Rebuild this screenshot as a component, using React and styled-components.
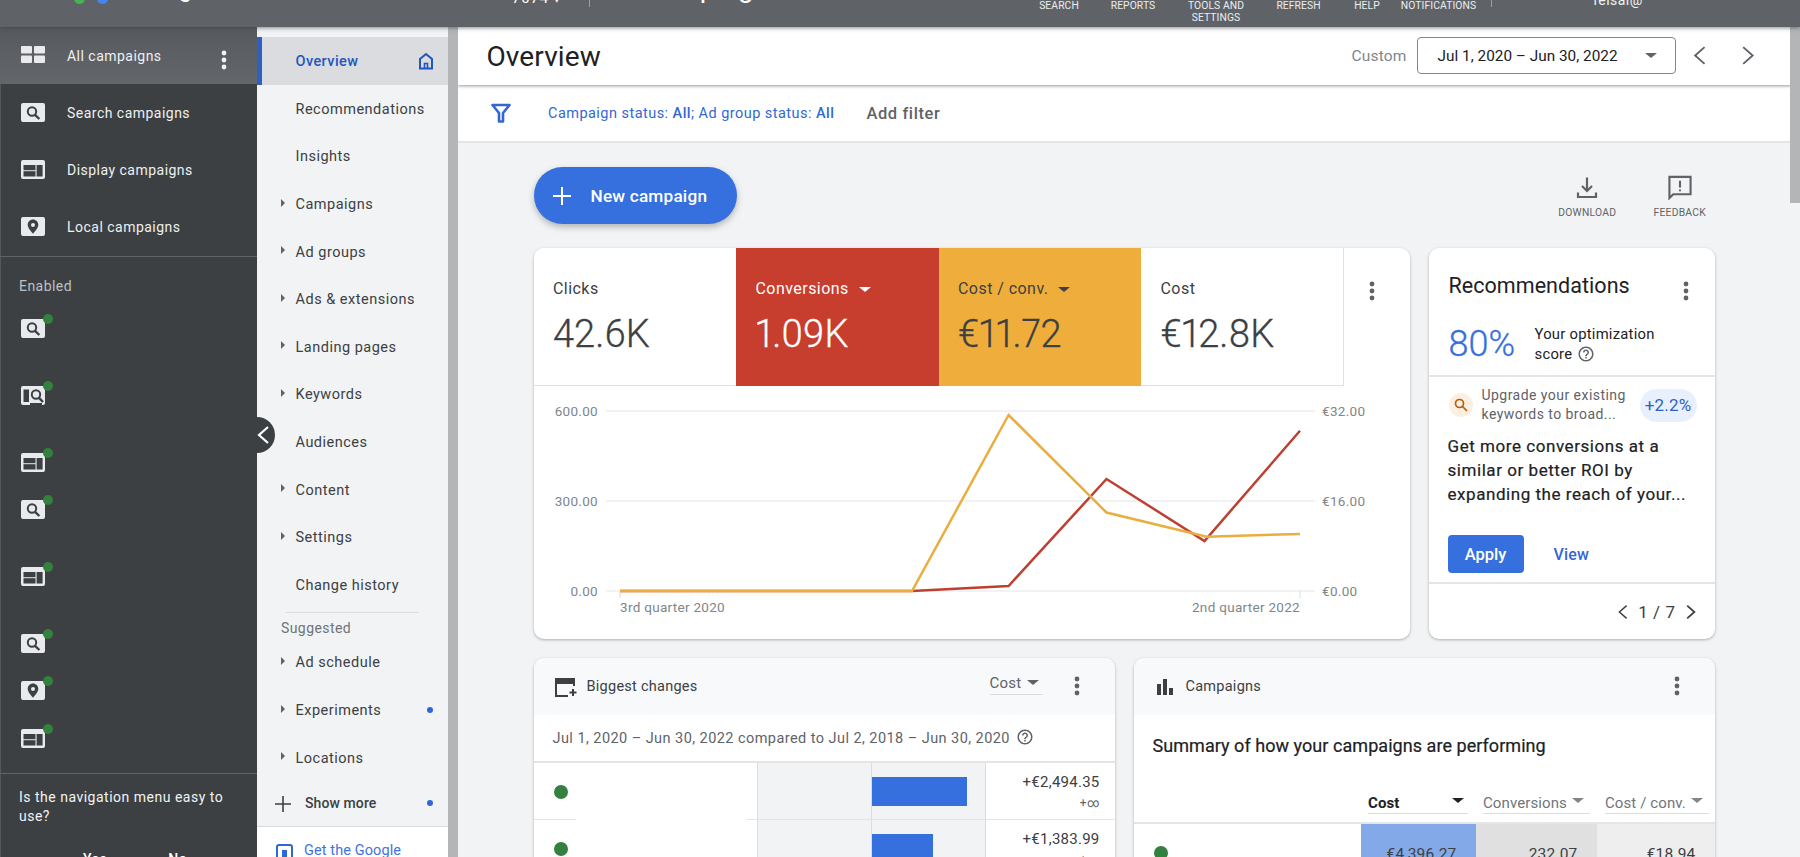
import React from 'react';
import styled, { createGlobalStyle } from 'styled-components';

const Global = createGlobalStyle`
  html, body { margin: 0; padding: 0; height: 100%; overflow: hidden; background: #f1f3f4; }
  body { font-family: Roboto, "Liberation Sans", sans-serif; -webkit-font-smoothing: antialiased; }
  * { box-sizing: border-box; }
`;

const Page = styled.div`
  width: 1800px; height: 857px; display: flex; flex-direction: column; overflow: hidden; position: relative;
`;

/* ---------- top bar ---------- */
const TopClip = styled.header`
  height: 27px; flex: none; overflow: hidden; background: #5f6368; position: relative; z-index: 5;
  box-shadow: 0 1px 4px rgba(60,64,67,.6);
`;
const TopInner = styled.div`
  height: 64px; margin-top: -37px; position: relative; display: flex; align-items: flex-start; color: #fff;
`;
const LogoArea = styled.div`
  width: 500px; height: 64px; display: flex; align-items: center; padding-left: 74px; flex: none;
`;
const LogoDot = styled.span`
  width: 11px; height: 11px; border-radius: 50%; background: ${p => p.$c}; margin-right: 12px; margin-top: 7px; flex: none;
`;
const BrandText = styled.span`
  font-size: 24px; margin-left: 2px; margin-top: -13px; letter-spacing: .2px; line-height: 36px; white-space: nowrap;
`;
const AcctText = styled.span`
  width: 89px; flex: none; font-size: 15px; height: 40px; padding: 26px 0 0 7px; line-height: 18px; letter-spacing: .8px; white-space: nowrap;
`;
const TopSep = styled.span`
  width: 1px; height: 44px; background: #9aa0a6; flex: none; margin-left: ${p => p.$ml || 0}px;
`;
const PageTitle = styled.span`
  width: 432px; flex: none; font-size: 28px; padding: 7px 0 0 15px; line-height: 36px; letter-spacing: .2px; white-space: nowrap;
`;
const TopAction = styled.div`
  position: relative; width: ${p => p.$w}px; flex: none; height: 64px; padding-top: 37px; text-align: center;
  font-size: 10.3px; line-height: 12px; color: #eceef0; letter-spacing: .1px; text-transform: uppercase;
`;
const UserText = styled.span`
  flex: none; font-size: 14px; line-height: 16px; padding: 29px 0 0 101px; letter-spacing: .5px; color: #f1f3f4;
`;

/* ---------- body ---------- */
const Body = styled.div`
  flex: 1; min-height: 0; display: flex; position: relative;
`;
const Rail = styled.aside`
  width: 257px; flex: none; background: #3c4043; color: #e8eaed; overflow: hidden; position: relative;
  box-shadow: inset 1px 0 0 #54585c;
`;
const RailRow = styled.div`
  height: 57px; display: flex; align-items: center; padding-left: 21px; gap: 22px; position: relative;
  font-size: 14px; letter-spacing: .48px; color: #eef0f1;
  background: ${p => (p.$active ? 'linear-gradient(#565a5e,#63676b)' : 'none')};
`;
const RailDivider = styled.div`
  height: 1px; background: #5f6368; margin-top: ${p => p.$mt || 0}px;
`;
const RailHeading = styled.div`
  font-size: 14px; line-height: 16px; letter-spacing: .45px; color: #bdc1c6; padding: 21px 0 0 19px;
`;
const RailList = styled.div`
  display: flex; flex-direction: column; padding: 25px 0 0 21px;
`;
const RailItem = styled.div`
  position: relative; width: 24px; height: 19px; margin-top: ${p => p.$step}px;
`;
const Status = styled.span`
  position: absolute; right: -8px; top: -5px; width: 10px; height: 10px; border-radius: 50%; background: #34803f;
`;
const KebabWrap = styled.span`
  position: absolute; left: ${p => p.$l}px; top: ${p => p.$t}px; display: flex;
`;
const Survey = styled.div`
  padding: 14px 19px 0; font-size: 14px; line-height: 19px; letter-spacing: .5px; color: #f1f3f4;
`;
const SurveyBtns = styled.div`
  display: flex; gap: 61px; padding: 24px 0 0 64px; color: #fff; font-weight: 500;
`;
const Collapse = styled.div`
  position: absolute; left: 257px; top: 390px; width: 18px; height: 36px; border-radius: 0 18px 18px 0;
  background: #3c4043; z-index: 4; display: flex; align-items: center; justify-content: flex-start;
  svg { margin-left: -1px; }
`;

/* ---------- section nav ---------- */
const Nav = styled.nav`
  width: 191px; flex: none; background: #f1f3f4; padding-top: 10px; overflow: hidden; display: flex; flex-direction: column;
`;
const NavRow = styled.div`
  height: 47.6px; flex: none; display: flex; align-items: center; position: relative; padding-left: 38.5px; padding-top: 2px;
  font-size: 14.5px; letter-spacing: .5px; white-space: nowrap;
  color: ${p => (p.$active ? '#1f56c0' : '#3c4043')};
  font-weight: ${p => (p.$active ? 500 : 400)};
  background: ${p => (p.$active ? '#dadce0' : 'none')};
  border-left: ${p => (p.$active ? '5px solid #2f5fc4' : '0 solid transparent')};
  ${p => p.$active && 'padding-left: 33.5px; letter-spacing: .42px;'}
`;
const Caret = styled.span`
  position: absolute; left: 24px; top: 50%; margin-top: -5px;
  border-left: 4px solid #5f6368; border-top: 4px solid transparent; border-bottom: 4px solid transparent;
`;
const BlueDot = styled.span`
  position: absolute; right: 15px; top: 50%; margin-top: -3px; width: 6px; height: 6px; border-radius: 50%; background: #2f66d8;
`;
const NavIcon = styled.span`
  position: absolute; right: 13px; top: 50%; margin-top: -9px; display: flex;
`;
const NavDivider = styled.div`
  height: 1px; background: #dadce0; margin: 4px 29px 0 28.5px; flex: none;
`;
const NavHeading = styled.div`
  font-size: 14px; line-height: 16px; letter-spacing: .42px; color: #6f7478; padding: 7px 0 2px 24px; flex: none;
`;
const ShowMore = styled.div`
  height: 46px; flex: none; position: relative; display: flex; align-items: center; padding-left: 48px;
  font-size: 14px; font-weight: 500; color: #3c4043; letter-spacing: .1px; border-bottom: 1px solid #dadce0;
`;
const PlusIcon = styled.span`
  position: absolute; left: 18px; top: 15px; display: flex;
`;
const GetApp = styled.div`
  flex: 1; background: #fff; display: flex; padding: 15px 0 0 19px; gap: 11px; color: #3f74e0; font-size: 14.5px;
  letter-spacing: .1px; line-height: 17px;
`;
const Gutter = styled.div`
  width: 10px; flex: none; background: #b3b5b7;
`;

/* ---------- main ---------- */
const Main = styled.main`
  flex: 1; min-width: 0; background: #f1f3f4; display: flex; flex-direction: column; overflow: hidden; position: relative;
`;
const HeaderBar = styled.div`
  height: 58px; flex: none; background: #fff; display: flex; align-items: center; padding-left: 28.5px;
  box-shadow: 0 1px 3px rgba(60,64,67,.55); position: relative; z-index: 2;
`;
const PageHeading = styled.h1`
  margin: 0; font-size: 28px; font-weight: 400; color: #202124; flex: 1; letter-spacing: .1px;
`;
const Custom = styled.span`
  font-size: 15.5px; color: #80868b; margin-right: 10px; letter-spacing: .15px;
`;
const DateBox = styled.div`
  width: 259px; height: 37px; border: 1.5px solid #80868b; border-radius: 4px; display: flex; align-items: center;
  padding-left: 20px; font-size: 15.3px; color: #202124; position: relative; letter-spacing: .03px; margin-bottom: 1px;
`;
const Tri = styled.span`
  position: ${p => (p.$abs ? 'absolute' : 'static')};
  ${p => p.$abs && `right: ${p.$abs}px; top: 50%;`}
  display: inline-block; flex: none;
  margin-top: ${p => (p.$abs ? '-3px' : (p.$mt || 0) + 'px')};
  border-top: ${p => p.$s || 5}px solid ${p => p.$c || '#5f6368'};
  border-left: ${p => (p.$s || 5) + 1}px solid transparent;
  border-right: ${p => (p.$s || 5) + 1}px solid transparent;
`;
const ArrowBtns = styled.div`
  display: flex; width: 124.5px; padding-left: 16px; gap: 31px; margin-bottom: 1px;
`;
const FilterBar = styled.div`
  height: 58px; flex: none; background: #fff; border-bottom: 2px solid #e3e5e7; display: flex; align-items: center; padding-left: 33px;
`;
const FilterText = styled.span`
  font-size: 14.5px; color: #3367d6; margin-left: 37px; letter-spacing: .46px; padding-top: 1px;
  b { font-weight: 500; }
`;
const AddFilter = styled.span`
  font-size: 16.5px; color: #5f6368; margin-left: 32px; letter-spacing: .6px; font-weight: 500;
`;
const Content = styled.div`
  padding: 24px 0 0 75.5px; width: 1257px; display: flex; flex-direction: column;
`;
const ActionRow = styled.div`
  height: 57px; display: flex; justify-content: space-between; align-items: flex-start;
`;
const NewBtn = styled.div`
  width: 203px; height: 57px; border-radius: 29px; background: #3670de; color: #fff; display: flex; align-items: center;
  padding-left: 18px; gap: 19px; font-size: 17.2px; font-weight: 500; letter-spacing: .2px;
  box-shadow: 0 3px 6px rgba(60,64,67,.35);
`;
const Tools = styled.div`
  display: flex; width: 185px; margin-right: -11px; margin-top: 8px; gap: 0;
`;
const Tool = styled.div`
  flex: 1; display: flex; flex-direction: column; align-items: center; gap: 7px; font-size: 10.3px; color: #5f6368;
  letter-spacing: .25px; text-transform: uppercase; line-height: 12px; svg { height: 25px; }
`;
const CardGrid = styled.div`
  display: grid; grid-template-columns: 876px 286px; gap: 19px; margin-top: 24px;
`;
const Card = styled.section`
  background: #fff; border-radius: 10px; box-shadow: 0 1px 3px rgba(60,64,67,.38); position: relative; overflow: hidden;
`;
const Tiles = styled.div`
  display: flex; height: 138px; position: relative;
`;
const Tile = styled.div`
  width: 202.5px; background: ${p => p.$bg || '#fff'}; color: ${p => p.$fg || '#3c4043'};
  padding: 31px 0 0 19.5px; border-bottom: ${p => (p.$bg ? '0' : '1px solid #e0e2e4')};
  border-right: ${p => (p.$line ? '1px solid #e0e2e4' : '0')};
`;
const TileLabel = styled.div`
  font-size: 16px; line-height: 20px; letter-spacing: .45px; display: flex; align-items: center; gap: 10px;
`;
const TileValue = styled.div`
  font-size: 38px; line-height: 46px; margin-top: 12px; letter-spacing: 0; font-weight: 300; font-variant-numeric: proportional-nums;
  -webkit-text-stroke: .3px currentColor;
`;
const Rest = styled.div`
  flex: 1; border-bottom: 1px solid #fff;
`;
const ChartWrap = styled.div`
  height: 253px; position: relative; display: flex;
`;
const RecHead = styled.div`
  padding: 26px 0 0 20px; height: 56px; font-size: 21.5px; line-height: 24px; color: #202124; letter-spacing: .05px;
`;
const ScoreRow = styled.div`
  height: 73px; display: flex; border-bottom: 2px solid #e3e5e7; padding-left: 20px;
`;
const Score = styled.div`
  font-size: 36px; line-height: 40px; color: #3670de; width: 86px; padding-top: 20px; height: 73px; font-weight: 300; -webkit-text-stroke: .3px #3670de;
`;
const ScoreText = styled.div`
  font-size: 14.8px; line-height: 19.5px; color: #202124; letter-spacing: .25px; padding-top: 21px;
  display: block; svg { vertical-align: -4px; margin-left: 5px; }
`;
const Upgrade = styled.div`
  display: flex; align-items: center; height: 56px; padding: 0 18px 0 20px;
`;
const UpIcon = styled.div`
  width: 24px; height: 24px; border-radius: 50%; background: #fdefe0; display: flex; align-items: center; justify-content: center; flex: none;
`;
const UpText = styled.div`
  flex: 1; font-size: 14px; line-height: 19px; letter-spacing: .46px; color: #5f6368; padding-left: 9px; white-space: nowrap;
`;
const Chip = styled.div`
  width: 57px; height: 33px; border-radius: 17px; background: #e8f0fe; color: #2f5fc4; font-size: 17px; display: flex; align-items: center; justify-content: center;
  letter-spacing: .2px; flex: none;
`;
const RecBody = styled.div`
  padding: 1px 0 0 19px; font-size: 17px; line-height: 24px; color: #202124; height: 102px; letter-spacing: .55px;
  font-weight: 400; -webkit-text-stroke: .2px #202124; white-space: nowrap;
`;
const RecActions = styled.div`
  display: flex; align-items: center; height: 38px; padding: 0 0 9px 19px; border-bottom: 2px solid #e3e5e7; box-sizing: content-box; gap: 30px;
`;
const ApplyBtn = styled.div`
  width: 76px; height: 38px; border-radius: 4px; background: #3670de; color: #fff; font-size: 16.5px; font-weight: 500;
  display: flex; align-items: center; justify-content: center;
`;
const ViewLink = styled.div`
  color: #3367d6; font-size: 16px; font-weight: 500; letter-spacing: .2px;
`;
const Pager = styled.div`
  height: 55px; display: flex; align-items: center; justify-content: flex-end; padding-right: 18px; gap: 8px; font-size: 17px; color: #3c4043; letter-spacing: .6px;
`;
const LowerGrid = styled.div`
  display: grid; grid-template-columns: 581px 581px; gap: 19px; margin-top: 19px;
`;
const LowerCard = styled(Card)`
  height: 400px;
`;
const CardHead = styled.div`
  height: 57px; background: #f8f9fa; display: flex; align-items: center; padding-left: 21px; gap: ${p => p.$gap || 10}px; position: relative;
  font-size: 14.5px; color: #3c4043; letter-spacing: .26px;
`;
const SortBtn = styled.div`
  position: absolute; left: 456px; top: 17px; width: 53px; height: 20px; border-bottom: 1px solid #dadce0; font-size: 15px; color: #5f6368;
  display: flex; gap: 6px; letter-spacing: .2px; line-height: 17px;
`;
const DateLine = styled.div`
  height: 48px; border-bottom: 2px solid #e3e5e7; padding: 0 0 0 19px; display: flex; align-items: center; gap: 6px; font-size: 14.5px; color: #5f6368; letter-spacing: .44px;
  white-space: nowrap; svg { margin-top: -3px; }
`;
const ChangeRow = styled.div`
  height: 57px; display: grid; grid-template-columns: 223px 114px 114px 130px; position: relative;
`;
const NameCell = styled.div`
  padding-left: 20px; display: flex; align-items: center;
  background: linear-gradient(to right, #e3e5e7 42px, transparent 42px, transparent 212px, #e3e5e7 212px) bottom / 100% 1px no-repeat;
`;
const Dot = styled.span`
  display: block; width: 14px; height: 14px; border-radius: 50%; background: #34803f; flex: none;
`;
const BarCell = styled.div`
  background: #f1f3f4; border-left: 1px solid #dadce0; border-bottom: 1px solid #e3e5e7; display: flex; align-items: center;
`;
const Bar = styled.div`
  height: 29px; background: #3670de;
`;
const ValCell = styled.div`
  border-left: 1px solid #dadce0; border-bottom: 1px solid #e3e5e7; text-align: right; padding: 9px 15px 0 0; font-size: 15px; line-height: 20px; color: #3c4043; letter-spacing: .25px;
  small { display: block; font-size: 12px; line-height: 20px; margin-top: 1px; color: #5f6368; }
`;
const Summary = styled.div`
  padding: 21px 0 0 19px; height: 78px; font-size: 18px; line-height: 20px; color: #202124; letter-spacing: .05px; -webkit-text-stroke: .2px #202124; white-space: nowrap;
`;
const ColHeads = styled.div`
  display: flex; height: 29px; padding-left: 234.5px; border-bottom: 2px solid #e3e5e7; gap: 15px; box-sizing: content-box;
`;
const ColHead = styled.div`
  width: ${p => p.$w}px; height: 21px; border-bottom: 1.5px solid #dadce0; display: flex; justify-content: space-between; align-items: flex-start;
  font-size: 15px; line-height: 19px; letter-spacing: .1px; color: ${p => (p.$on ? '#202124' : '#70757a')}; font-weight: ${p => (p.$on ? 700 : 400)};
  padding-right: ${p => p.$pr}px; padding-top: 1px;
`;
const SumRow = styled.div`
  display: grid; grid-template-columns: 227px 115px 121px 118px; height: 60px;
`;
const SumName = styled.div`
  padding-left: 20px; padding-top: 22px;
`;
const SumCell = styled.div`
  background: ${p => p.$bg}; text-align: right; padding: 20px ${p => p.$r}px 0 0; font-size: 15.5px; line-height: 20px; color: #3c4043; letter-spacing: .2px;
`;
const ScrollThumb = styled.div`
  position: absolute; right: 0; top: 0; width: 10px; height: 176px; background: #b3b5b7; z-index: 3;
`;

const Kebab = ({ c = '#5f6368' }) => (
  <svg width="6" height="20" viewBox="0 0 6 20"><circle cx="3" cy="3" r="2.4" fill={c} /><circle cx="3" cy="10" r="2.4" fill={c} /><circle cx="3" cy="17" r="2.4" fill={c} /></svg>
);
const Chevron = ({ left, size = 20, c = '#5f6368', w = 1.8 }) => (
  <svg width={size * .8} height={size} viewBox="0 0 16 20"><path d={left ? 'M12 2 L3 10 L12 18' : 'M4 2 L13 10 L4 18'} fill="none" stroke={c} strokeWidth={w} /></svg>
);
const Glyph = ({ kind }) => {
  const d = '#3c4043';
  return (
    <svg width="24" height="19" viewBox="0 0 24 19" style={{ display: 'block' }}>
      <rect width="24" height="19" rx="2" fill="#e8eaed" />
      {kind === 'search' && <g fill="none" stroke={d} strokeWidth="2"><circle cx="11" cy="8.5" r="4.2" /><path d="M14 11.8 L18.4 16" strokeWidth="2.4" /></g>}
      {kind === 'display' && <g fill={d}><rect x="2.5" y="5" width="12" height="5.2" /><rect x="2.5" y="11.2" width="12" height="5.3" /><rect x="15.6" y="5" width="6" height="11.5" /></g>}
      {kind === 'local' && <g><path d="M12 2.6c-3 0-5.3 2.3-5.3 5.2 0 3.6 5.3 9 5.3 9s5.3-5.4 5.3-9c0-2.9-2.3-5.2-5.3-5.2z" fill={d} /><circle cx="12" cy="7.9" r="2" fill="#e8eaed" /></g>}
      {kind === 'both' && <g><rect x="2.5" y="3.5" width="5.5" height="12.5" fill={d} /><g fill="none" stroke={d} strokeWidth="2"><circle cx="15" cy="8.5" r="4.2" /><path d="M18 11.8 L22 16" strokeWidth="2.4" /></g><path d="M9 17h12v2H9z" fill="#3c4043" /></g>}
    </svg>
  );
};

const railTop = [['search', 'Search campaigns'], ['display', 'Display campaigns'], ['local', 'Local campaigns']];
const railItems = [['search', 0], ['both', 48], ['display', 48], ['search', 28], ['display', 48], ['search', 48], ['local', 28], ['display', 29]];
const navItems = [
  ['Recommendations', false], ['Insights', false], ['Campaigns', true], ['Ad groups', true], ['Ads & extensions', true],
  ['Landing pages', true], ['Keywords', true], ['Audiences', false], ['Content', true], ['Settings', true], ['Change history', false],
];

const yellow = '620,591 912,591 1008.6,415 1106.5,512.5 1206.7,536.7 1300,534';
const red = '620,591 912,591 1008.6,586 1106.5,479 1204.5,541 1300,430.7';
const toChart = pts => pts.split(' ').map(p => { const [x, y] = p.split(','); return `${x - 534},${y - 386}`; }).join(' ');

const Chart = () => (
  <svg width="876" height="253" viewBox="0 0 876 253" style={{ display: 'block' }}>
    {[25, 115, 205].map(y => <line key={y} x1="72" x2="781" y1={y} y2={y} stroke="#e3e5e7" strokeWidth="1" />)}
    <line x1="86" x2="86" y1="205" y2="212" stroke="#dadce0" />
    <line x1="766" x2="766" y1="205" y2="212" stroke="#dadce0" />
    <g fontFamily="Roboto" fontSize="13.5" fill="#80868b" letterSpacing=".3">
      <text x="64" y="30" textAnchor="end">600.00</text>
      <text x="64" y="120" textAnchor="end">300.00</text>
      <text x="64" y="210" textAnchor="end">0.00</text>
      <text x="788" y="30">€32.00</text>
      <text x="788" y="120">€16.00</text>
      <text x="788" y="210">€0.00</text>
      <text x="86" y="226">3rd quarter 2020</text>
      <text x="766" y="226" textAnchor="end">2nd quarter 2022</text>
    </g>
    <polyline points={toChart(red)} fill="none" stroke="#bd4030" strokeWidth="2.5" />
    <polyline points={toChart(yellow)} fill="none" stroke="#eaae3e" strokeWidth="2.5" />
  </svg>
);

const HelpIcon = ({ s = 18 }) => (
  <svg width={s} height={s} viewBox="0 0 24 24" fill="#5f6368"><path d="M11 18h2v-2h-2v2zm1-16C6.48 2 2 6.48 2 12s4.48 10 10 10 10-4.48 10-10S17.52 2 12 2zm0 18c-4.41 0-8-3.59-8-8s3.59-8 8-8 8 3.59 8 8-3.59 8-8 8zm0-14c-2.21 0-4 1.79-4 4h2c0-1.1.9-2 2-2s2 .9 2 2c0 2-3 1.75-3 5h2c0-2.25 3-2.5 3-5 0-2.21-1.79-4-4-4z" /></svg>
);

export default function App() {
  return (
    <Page>
      <Global />
      <TopClip>
        <TopInner>
          <LogoArea>
            <LogoDot $c="#4caf50" /><LogoDot $c="#4285f4" />
            <BrandText>&nbsp; Google Ads</BrandText>
          </LogoArea>
          <AcctText>-7074 ▾</AcctText>
          <TopSep />
          <PageTitle>All campaigns</PageTitle>
          <TopAction $w={74}>Search</TopAction>
          <TopAction $w={74}>Reports</TopAction>
          <TopAction $w={92}>Tools and Settings</TopAction>
          <TopAction $w={73}>Refresh</TopAction>
          <TopAction $w={64}>Help</TopAction>
          <TopAction $w={79}>Notifications</TopAction>
          <TopSep $ml={13} />
          <UserText>feisal@</UserText>
        </TopInner>
      </TopClip>
      <Body>
        <Rail>
          <RailRow $active>
            <svg width="24" height="17" viewBox="0 0 24 17" style={{ marginTop: -2 }} fill="#e8eaed">
              <rect x="0" y="0" width="11" height="7.5" rx="1" /><rect x="13" y="0" width="11" height="7.5" rx="1" />
              <rect x="0" y="9.5" width="11" height="7.5" rx="1" /><rect x="13" y="9.5" width="11" height="7.5" rx="1" />
            </svg>
            <span>All campaigns</span>
            <KebabWrap $l={221} $t={23}><Kebab c="#f1f3f4" /></KebabWrap>
          </RailRow>
          {railTop.map(([k, t]) => (
            <RailRow key={t}><Glyph kind={k} /><span>{t}</span></RailRow>
          ))}
          <RailDivider $mt={1} />
          <RailHeading>Enabled</RailHeading>
          <RailList>
            {railItems.map(([k, s], i) => (
              <RailItem key={i} $step={s}><Glyph kind={k} /><Status /></RailItem>
            ))}
          </RailList>
          <RailDivider $mt={25} />
          <Survey>
            Is the navigation menu easy to use?
            <SurveyBtns><span>Yes</span><span>No</span></SurveyBtns>
          </Survey>
        </Rail>
        <Collapse><Chevron left size={20} c="#fff" w={2.2} /></Collapse>
        <Nav>
          <NavRow $active>Overview
            <NavIcon>
              <svg width="18" height="18" viewBox="0 0 18 18" fill="none" stroke="#1f56c0" strokeWidth="2"><path d="M3 16.5V7l6-5 6 5v9.5z" /><path d="M7.5 16.5v-5h3v5" strokeWidth="1.6" /></svg>
            </NavIcon>
          </NavRow>
          {navItems.map(([t, c]) => (
            <NavRow key={t}>{c && <Caret />}{t}</NavRow>
          ))}
          <NavDivider />
          <NavHeading>Suggested</NavHeading>
          <NavRow><Caret />Ad schedule</NavRow>
          <NavRow><Caret />Experiments<BlueDot /></NavRow>
          <NavRow><Caret />Locations</NavRow>
          <ShowMore>
            <PlusIcon><svg width="16" height="16" viewBox="0 0 16 16"><path d="M8 0v16M0 8h16" stroke="#3c4043" strokeWidth="1.6" /></svg></PlusIcon>
            Show more<BlueDot />
          </ShowMore>
          <GetApp>
            <svg width="17" height="24" viewBox="0 0 17 24" fill="none" stroke="#2f66d8" strokeWidth="2"><rect x="1" y="3" width="15" height="24" rx="2" /><rect x="6" y="8" width="5" height="20" fill="#2f66d8" stroke="none" /></svg>
            <span>Get the Google</span>
          </GetApp>
        </Nav>
        <Gutter />
        <Main>
          <HeaderBar>
            <PageHeading>Overview</PageHeading>
            <Custom>Custom</Custom>
            <DateBox>Jul 1, 2020 – Jun 30, 2022<Tri $abs={18} $c="#5f6368" /></DateBox>
            <ArrowBtns><Chevron left size={21} /><Chevron size={21} /></ArrowBtns>
          </HeaderBar>
          <FilterBar>
            <svg width="20" height="21" viewBox="0 0 20 21" fill="none" stroke="#3367d6" strokeWidth="2.6"><path d="M1.5 2h17l-6.5 8v8.5l-4 0V10z" strokeLinejoin="round" /></svg>
            <FilterText>Campaign status: <b>All</b>; Ad group status: <b>All</b></FilterText>
            <AddFilter>Add filter</AddFilter>
          </FilterBar>
          <Content>
            <ActionRow>
              <NewBtn>
                <svg width="20" height="20" viewBox="0 0 20 20"><path d="M10 1v18M1 10h18" stroke="#fff" strokeWidth="2" /></svg>
                New campaign
              </NewBtn>
              <Tools>
                <Tool>
                  <svg width="24" height="24" viewBox="0 0 24 24" fill="none" stroke="#5f6368" strokeWidth="2.2"><path d="M12 2v13M7 10.5l5 5 5-5" /><path d="M3 17v4.5h18V17" /></svg>
                  Download
                </Tool>
                <Tool>
                  <svg width="26" height="26" viewBox="0 0 26 26" fill="none" stroke="#5f6368" strokeWidth="2.2"><path d="M2 2h22v18H6l-4 4z" /><path d="M13 6v7M13 15v2" /></svg>
                  Feedback
                </Tool>
              </Tools>
            </ActionRow>
            <CardGrid>
              <Card>
                <Tiles>
                  <Tile><TileLabel>Clicks</TileLabel><TileValue>42.6K</TileValue></Tile>
                  <Tile $bg="#c73d2e" $fg="#fff"><TileLabel>Conversions <Tri $c="#fff" /></TileLabel><TileValue>1.09K</TileValue></Tile>
                  <Tile $bg="#efae3b"><TileLabel>Cost / conv. <Tri $c="#3c4043" /></TileLabel><TileValue>€11.72</TileValue></Tile>
                  <Tile $line><TileLabel>Cost</TileLabel><TileValue>€12.8K</TileValue></Tile>
                  <Rest />
                  <KebabWrap $l={835} $t={33}><Kebab /></KebabWrap>
                </Tiles>
                <ChartWrap><Chart /></ChartWrap>
              </Card>
              <Card>
                <RecHead>Recommendations</RecHead>
                <KebabWrap $l={254} $t={33}><Kebab /></KebabWrap>
                <ScoreRow>
                  <Score>80%</Score>
                  <ScoreText>Your optimization<br />score<HelpIcon /></ScoreText>
                </ScoreRow>
                <Upgrade>
                  <UpIcon>
                    <svg width="14" height="14" viewBox="0 0 14 14" fill="none" stroke="#b85c0a" strokeWidth="1.7"><circle cx="5.5" cy="5.5" r="4" /><path d="M8.5 8.5L13 13" /></svg>
                  </UpIcon>
                  <UpText>Upgrade your existing<br />keywords to broad...</UpText>
                  <Chip>+2.2%</Chip>
                </Upgrade>
                <RecBody>Get more conversions at a<br />similar or better ROI by<br />expanding the reach of your...</RecBody>
                <RecActions><ApplyBtn>Apply</ApplyBtn><ViewLink>View</ViewLink></RecActions>
                <Pager><Chevron left size={16} c="#3c4043" /><span>1 / 7</span><Chevron size={16} c="#3c4043" w={2.2} /></Pager>
              </Card>
            </CardGrid>
            <LowerGrid>
              <LowerCard>
                <CardHead>
                  <svg width="22" height="20" viewBox="0 0 22 20" fill="none" stroke="#3c4043" strokeWidth="2"><path d="M19 9V2H1v17h12" /><path d="M1 3h18v3H1z" fill="#3c4043" /><path d="M18 12v7M14.5 15.5h7" /></svg>
                  Biggest changes
                  <SortBtn>Cost<Tri $mt={5} /></SortBtn>
                  <KebabWrap $l={540} $t={18}><Kebab /></KebabWrap>
                </CardHead>
                <DateLine>Jul 1, 2020 – Jun 30, 2022 compared to Jul 2, 2018 – Jun 30, 2020<HelpIcon /></DateLine>
                <ChangeRow>
                  <NameCell><Dot /></NameCell><BarCell />
                  <BarCell><Bar style={{ width: 95 }} /></BarCell>
                  <ValCell>+€2,494.35<small>+∞</small></ValCell>
                </ChangeRow>
                <ChangeRow>
                  <NameCell><Dot /></NameCell><BarCell />
                  <BarCell><Bar style={{ width: 61 }} /></BarCell>
                  <ValCell>+€1,383.99<small>+∞</small></ValCell>
                </ChangeRow>
              </LowerCard>
              <LowerCard>
                <CardHead $gap={11}>
                  <svg width="20" height="20" viewBox="0 0 20 20" fill="#3c4043"><rect x="2" y="7" width="4" height="11" /><rect x="8" y="2" width="4" height="16" /><rect x="14" y="11" width="4" height="7" /></svg>
                  Campaigns
                  <KebabWrap $l={540} $t={18}><Kebab /></KebabWrap>
                </CardHead>
                <Summary>Summary of how your campaigns are performing</Summary>
                <ColHeads>
                  <ColHead $w={100} $pr={4} $on>Cost<Tri $c="#202124" $mt={4} /></ColHead>
                  <ColHead $w={107} $pr={6}>Conversions<Tri $c="#80868b" $mt={4} /></ColHead>
                  <ColHead $w={104} $pr={6}>Cost / conv.<Tri $c="#80868b" $mt={4} /></ColHead>
                </ColHeads>
                <SumRow>
                  <SumName><Dot /></SumName>
                  <SumCell $bg="#84a9e8" $r={19}>€4,396.27</SumCell>
                  <SumCell $bg="#e0e0e0" $r={19}>232.07</SumCell>
                  <SumCell $bg="#eeeeee" $r={19}>€18.94</SumCell>
                </SumRow>
              </LowerCard>
            </LowerGrid>
          </Content>
          <ScrollThumb />
        </Main>
      </Body>
    </Page>
  );
}
